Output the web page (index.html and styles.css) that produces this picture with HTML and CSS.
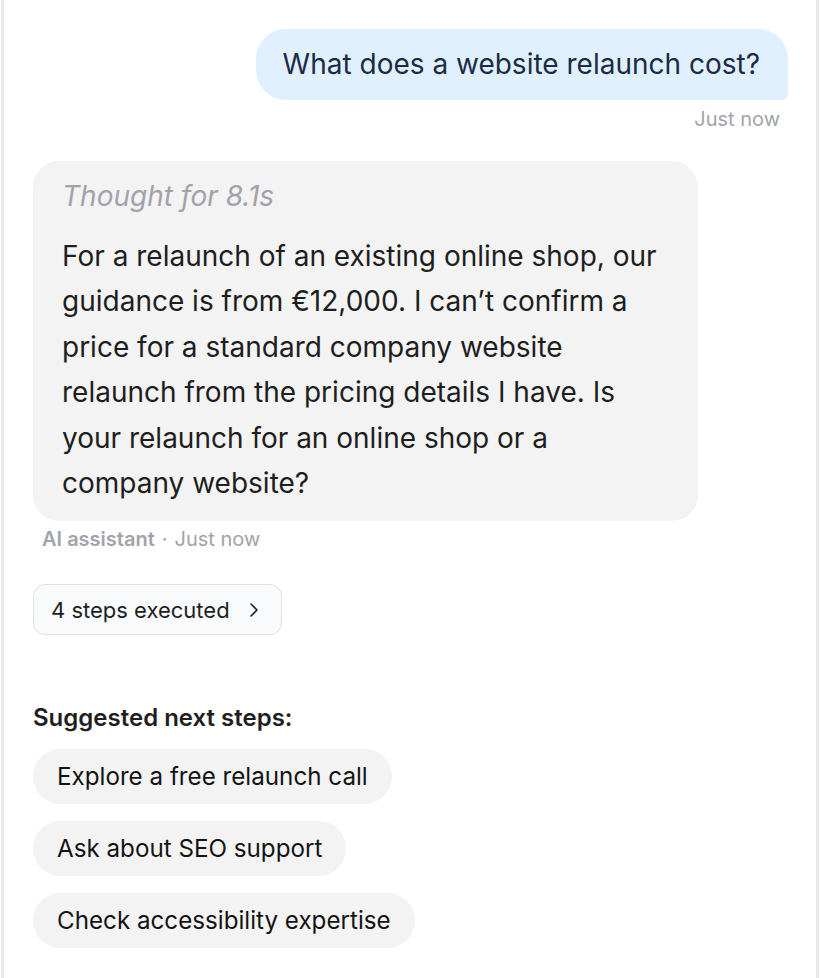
FILE: index.html
```html
<!DOCTYPE html>
<html lang="en">
<head>
<meta charset="utf-8">
<link rel="stylesheet" href="styles.css">
</head>
<body>
<div class="panel">
  <div class="user-row">
    <div class="user-bubble">What does a website relaunch cost?</div>
    <div class="user-time">Just now</div>
  </div>
  <div class="assistant">
    <div class="bot-bubble">
      <div class="thought">Thought for 8.1s</div>
      <p class="answer">For a relaunch of an existing online shop, our guidance is from €12,000. I can’t confirm a price for a standard company website relaunch from the pricing details I have. Is your relaunch for an online shop or a company website?</p>
    </div>
    <div class="meta"><span class="who">AI assistant</span><span class="dot">·</span><span>Just now</span></div>
    <button class="steps">4 steps executed
      <svg width="16" height="16" viewBox="0 0 16 16"><path d="M5 2 L11 8 L5 14" fill="none" stroke="#222" stroke-width="1.6" stroke-linecap="round" stroke-linejoin="round"/></svg>
    </button>
  </div>
  <div class="suggest">
    <div class="suggest-title">Suggested next steps:</div>
    <div class="chips">
      <button class="chip">Explore a free relaunch call</button>
      <button class="chip">Ask about SEO support</button>
      <button class="chip">Check accessibility expertise</button>
    </div>
  </div>
</div>
</body>
</html>
```

FILE: styles.css
```css
html, body {
  margin: 0;
  padding: 0;
  background: #fff;
}
body {
  font-family: Inter, "Noto Sans", sans-serif;
  color: #1f1f1f;
}
.panel {
  box-sizing: border-box;
  width: 818px;
  min-height: 978px;
  margin-left: 1px;
  border-left: 3px solid #e9e9e9;
  border-right: 3px solid #e9e9e9;
  padding: 29px 28px 0 29px;
}
.user-row {
  display: flex;
  flex-direction: column;
  align-items: flex-end;
}
.user-bubble {
  background: #e1f0fe;
  color: #1c2b45;
  font-size: 28px;
  line-height: 34px;
  padding: 18px 28px 19px 27px;
  border-radius: 30px 30px 6px 30px;
}
.user-time {
  margin-top: 7px;
  margin-right: 8px;
  font-size: 20px;
  line-height: 24px;
  color: #a2a3ab;
}
.assistant {
  margin-top: 30px;
}
.bot-bubble {
  width: 665px;
  box-sizing: border-box;
  background: #f3f3f3;
  border-radius: 26px;
  padding: 18px 30px 15px 29px;
}
.thought {
  font-style: italic;
  color: #a2a2ad;
  font-size: 28px;
  line-height: 34px;
}
.answer {
  margin: 21px 0 0 0;
  font-size: 28px;
  line-height: 45.4px;
  color: #1e1e1e;
}
.meta {
  margin: 6px 0 0 9px;
  font-size: 20px;
  line-height: 24px;
  color: #a2a3ab;
}
.who {
  font-weight: 600;
}
.dot {
  margin: 0 7px;
}
.steps {
  margin-top: 33px;
  display: inline-flex;
  align-items: center;
  gap: 16px;
  font-family: inherit;
  font-size: 22px;
  color: #1f1f1f;
  background: #f9fafb;
  border: 1px solid #dfe1e5;
  border-radius: 12px;
  padding: 0 19px 0 17px;
  height: 51px;
}
.suggest {
  margin-top: 68px;
}
.suggest-title {
  font-size: 24px;
  font-weight: 600;
  line-height: 30px;
  color: #1f1f1f;
}
.chips {
  margin-top: 16px;
  display: flex;
  flex-direction: column;
  align-items: flex-start;
  gap: 17px;
}
.chip {
  font-family: inherit;
  font-size: 24.2px;
  color: #141414;
  background: #f3f3f3;
  border: none;
  border-radius: 28px;
  height: 55px;
  padding: 0 24px;
}
```
